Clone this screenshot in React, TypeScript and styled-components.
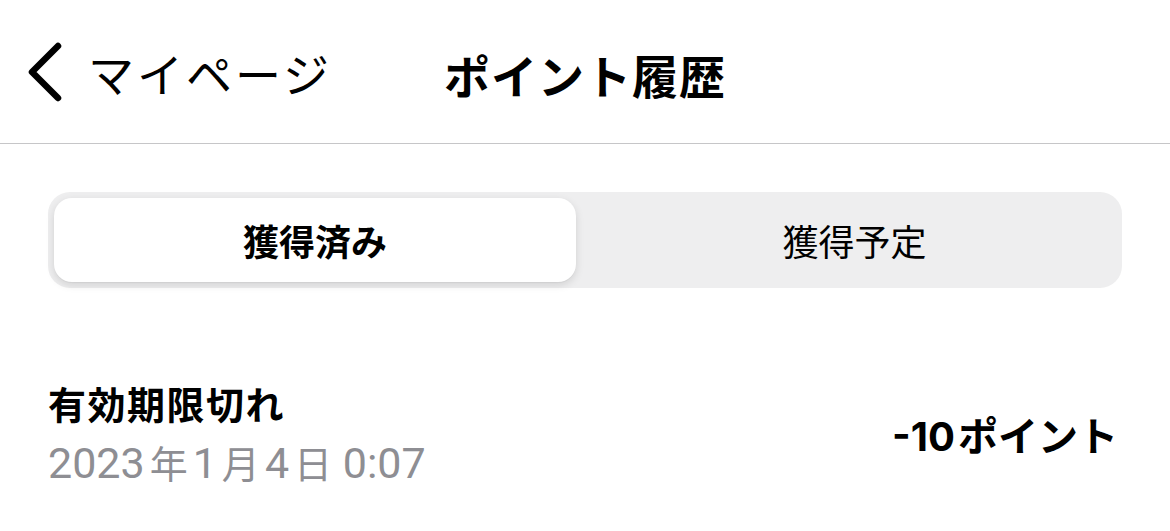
import React from "react";
import styled, { createGlobalStyle } from "styled-components";

const Global = createGlobalStyle`
  html, body { margin: 0; padding: 0; background: #fff; }
  body { font-family: "Noto Sans CJK JP", "Noto Sans", sans-serif; color: #000; }
`;

const Page = styled.div`
  width: 1170px;
  height: 531px;
  overflow: hidden;
  background: #fff;
`;

const Header = styled.header`
  position: relative;
  height: 144px;
  border-bottom: 1px solid #c6c6c8;
  display: flex;
  align-items: center;
  justify-content: center;
  padding-top: 4px;
  box-sizing: border-box;
`;

const Back = styled.div`
  position: absolute;
  left: 24px;
  top: 0;
  bottom: 0;
  display: flex;
  align-items: center;
  gap: 22px;
  font-size: 46px;
  font-weight: 400;
  letter-spacing: 3px;
`;

const Title = styled.h1`
  margin: 0;
  font-size: 46px;
  font-weight: 700;
  letter-spacing: 1px;
`;

const Content = styled.main`
  padding: 48px 48px 0;
`;

const Segmented = styled.div`
  height: 96px;
  background: #eeeeef;
  border-radius: 22px;
  padding: 6px;
  box-sizing: border-box;
  display: grid;
  grid-template-columns: 1fr 1fr;
`;

const Tab = styled.div<{ $active?: boolean }>`
  display: flex;
  align-items: center;
  justify-content: center;
  border-radius: 18px;
  font-size: 36px;
  font-weight: ${(p) => (p.$active ? 700 : 400)};
  background: ${(p) => (p.$active ? "#fff" : "transparent")};
  margin-right: ${(p) => (p.$active ? "9px" : "0")};
  padding-left: ${(p) => (p.$active ? "0" : "8px")};
  box-shadow: ${(p) => (p.$active ? "0 3px 8px rgba(0,0,0,0.12), 0 1px 1px rgba(0,0,0,0.04)" : "none")};
`;

const Row = styled.div`
  margin-top: 90px;
  display: flex;
  align-items: center;
  justify-content: space-between;
  padding-right: 4px;
`;

const Info = styled.div`
  display: flex;
  flex-direction: column;
  gap: 8px;
`;

const Label = styled.div`
  font-size: 38px;
  font-weight: 700;
  line-height: 50px;
  letter-spacing: 1.5px;
`;

const DateText = styled.div`
  font-family: "Roboto", "Noto Sans CJK JP", sans-serif;
  font-size: 43px;
  color: #8e8e93;
  line-height: 52px;
  white-space: pre;
`;

const Kanji = styled.span<{ $last?: boolean }>`
  font-family: "Noto Sans CJK JP", sans-serif;
  font-size: 38px;
  margin: ${(p) => (p.$last ? "0 0 0 5px" : "0 5px")};
`;

const Amount = styled.div`
  font-family: "Inter", "Noto Sans CJK JP", sans-serif;
  font-size: 40px;
  font-weight: 700;
`;

const Unit = styled.span`
  margin-left: 3px;
`;

export default function App() {
  return (
    <Page>
      <Global />
      <Header>
        <Back>
          <svg width="42" height="62" viewBox="0 0 42 62">
            <path d="M34 5 L8 31 L34 57" fill="none" stroke="#000" strokeWidth="6.5" strokeLinecap="round" strokeLinejoin="round" />
          </svg>
          <span>マイページ</span>
        </Back>
        <Title>ポイント履歴</Title>
      </Header>
      <Content>
        <Segmented>
          <Tab $active>獲得済み</Tab>
          <Tab>獲得予定</Tab>
        </Segmented>
        <Row>
          <Info>
            <Label>有効期限切れ</Label>
            <DateText>
              2023<Kanji>年</Kanji>1<Kanji>月</Kanji>4<Kanji $last>日</Kanji>{" "}0:07
            </DateText>
          </Info>
          <Amount>
            -10<Unit>ポイント</Unit>
          </Amount>
        </Row>
      </Content>
    </Page>
  );
}
